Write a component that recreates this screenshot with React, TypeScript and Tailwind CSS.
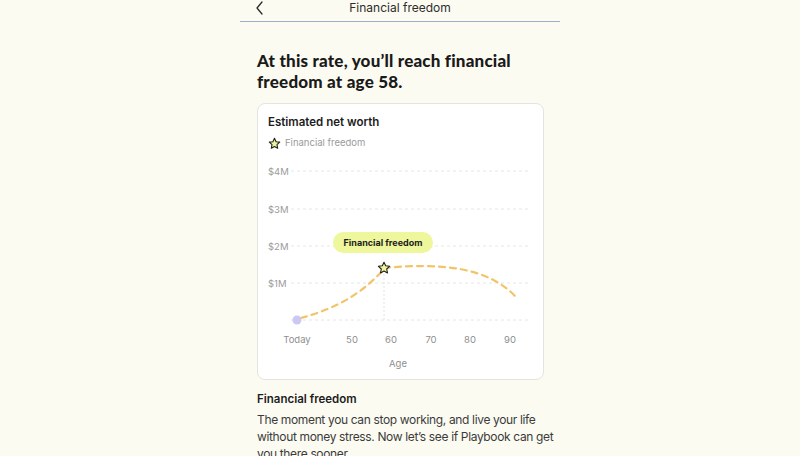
import React from 'react';

const ticks = [
  { label: 'Today', x: 39 },
  { label: '50', x: 94 },
  { label: '60', x: 133 },
  { label: '70', x: 173 },
  { label: '80', x: 212 },
  { label: '90', x: 252 },
];

const rows = [
  { label: '$4M', y: 13 },
  { label: '$3M', y: 51 },
  { label: '$2M', y: 88 },
  { label: '$1M', y: 125 },
  { label: '', y: 162 },
];

const Star = ({ size = 13 }: { size?: number }) => (
  <svg width={size} height={size} viewBox="0 0 24 24">
    <path
      d="M12 2.5l2.9 6.2 6.7.8-5 4.6 1.3 6.7L12 17.5l-5.9 3.3 1.3-6.7-5-4.6 6.7-.8z"
      fill="#eef59a"
      stroke="#1f1f1f"
      strokeWidth="2"
      strokeLinejoin="round"
    />
  </svg>
);

const Chart = () => (
  <svg width="285" height="218" viewBox="0 0 285 218" className="block">
    {rows.map((r) => (
      <g key={r.y}>
        {r.label && (
          <text x="10" y={r.y + 3.5} fontSize="9.5" fill="#9b9b9b" fontFamily="Inter, sans-serif">
            {r.label}
          </text>
        )}
        <line x1="33" x2="273" y1={r.y} y2={r.y} stroke="#e6e6e6" strokeWidth="1" strokeDasharray="3 3" />
      </g>
    ))}
    <line x1="126" x2="126" y1="112" y2="162" stroke="#e2e2e2" strokeWidth="1" strokeDasharray="2 2" />
    <path
      d="M43 160 C72 152 100 140 126 111"
      fill="none"
      stroke="#f2c46a"
      strokeWidth="2.2"
      strokeDasharray="6 5"
      strokeLinecap="round"
    />
    <path
      d="M126 110 C180 105 228 108 257 138"
      fill="none"
      stroke="#f2c46a"
      strokeWidth="2.2"
      strokeDasharray="6 5"
      strokeLinecap="round"
    />
    <circle cx="39" cy="162" r="4.5" fill="#cbc8f4" />
    <g transform="translate(119 103)">
      <path
        d="M7 1.2l1.7 3.6 3.9.5-2.9 2.7.8 3.9L7 10l-3.5 1.9.8-3.9L1.4 5.3l3.9-.5z"
        fill="#eef59a"
        stroke="#1f1f1f"
        strokeWidth="1.1"
        strokeLinejoin="round"
      />
    </g>
    <rect x="75" y="74" width="100" height="21" rx="10.5" fill="#eef79c" />
    <text x="125" y="88" fontSize="9" fontWeight="700" fill="#1d1d1d" textAnchor="middle" fontFamily="Inter, sans-serif">
      Financial freedom
    </text>
    {ticks.map((t) => (
      <text key={t.label} x={t.x} y="184.5" fontSize="9.5" fill="#8f8f8f" textAnchor="middle" fontFamily="Inter, sans-serif">
        {t.label}
      </text>
    ))}
    <text x="140" y="208.5" fontSize="9.5" fill="#8f8f8f" textAnchor="middle" fontFamily="Inter, sans-serif">
      Age
    </text>
  </svg>
);

export default function App() {
  return (
    <div className="w-full h-[456px] overflow-hidden bg-[#fcfbf2] font-['Inter',sans-serif]">
      <div className="w-[320px] mx-auto">
        <div className="relative h-[22px] flex items-start justify-center border-b border-[#a3abca]">
          <svg className="absolute left-[14px] top-[1px]" width="12" height="14" viewBox="0 0 12 14">
            <path d="M8 1L3 7l5 6" fill="none" stroke="#2a2a2a" strokeWidth="1.3" strokeLinecap="round" strokeLinejoin="round" />
          </svg>
          <span className="text-[12px] leading-[16px] text-[#2d2d2d]">Financial freedom</span>
        </div>

        <div className="pl-[17px] pr-[16px]">
          <h1 className="mt-[28px] text-[17px] leading-[21px] font-black text-[#1a1a1a] font-['Lato',sans-serif] tracking-[0.2px]">
            At this rate, you’ll reach financial freedom at age 58.
          </h1>

          <div className="mt-[11px] h-[277px] bg-white border border-[#e4e4e0] rounded-lg">
            <div className="px-[10px] pt-[10px]">
              <div className="text-[11.5px] leading-[16px] font-semibold text-[#1c1c1c]">Estimated net worth</div>
              <div className="mt-[6px] flex items-center gap-[4px]">
                <Star size={13} />
                <span className="text-[9.5px] leading-[14px] text-[#9a9a9a]">Financial freedom</span>
              </div>
            </div>
            <div className="mt-[8px]">
              <Chart />
            </div>
          </div>

          <div className="mt-[11px] text-[11.5px] leading-[16px] font-semibold text-[#1c1c1c]">Financial freedom</div>
          <p className="mt-[4px] -mr-[12px] text-[12px] leading-[17px] tracking-[-0.35px] text-[#3b3b3b]">
            The moment you can stop working, and live your life without money stress. Now let’s see if Playbook can get
            you there sooner.
          </p>
        </div>
      </div>
    </div>
  );
}
